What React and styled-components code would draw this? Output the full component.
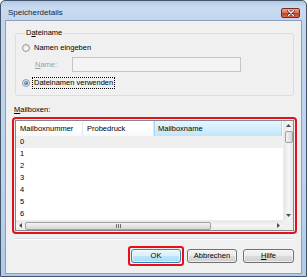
import React from 'react';
import styled, { createGlobalStyle } from 'styled-components';

const Global = createGlobalStyle`
  html, body { margin: 0; padding: 0; background: #fff; }
  body { font-family: "Liberation Sans", Arial, sans-serif; font-size: 7.5px; color: #000; }
  #root { width: 307px; height: 277px; }
`;

const Window = styled.div`
  box-sizing: border-box;
  width: 307px;
  height: 277px;
  border: 1px solid #44546a;
  border-radius: 5px 5px 0 0;
  background: linear-gradient(to bottom, #b2cae6 0px, #c9dbf0 7px, #c2d6ed 19px, #bcd3ec 60%, #b0cbe8 100%);
  display: flex;
  flex-direction: column;
  overflow: hidden;
`;

const TitleBar = styled.div`
  height: 19px;
  box-sizing: border-box;
  padding: 4px 6px 0 7px;
  display: flex;
  align-items: center;
  justify-content: space-between;
`;

const Title = styled.span`
  font-size: 8px;
  line-height: 10px;
  color: #1b2633;
`;

const CloseButton = styled.div`
  box-sizing: border-box;
  width: 19px;
  height: 10px;
  border: 1px solid #7a2a22;
  border-radius: 2px;
  background: linear-gradient(#eaa597 0%, #d9735f 45%, #c4402a 55%, #d8664c 100%);
  display: flex;
  align-items: center;
  justify-content: center;
`;

const Client = styled.div`
  flex: 1;
  margin: 0 4px 2px 4px;
  background: #f0f0f0;
  border: 1px solid #8aa0ba;
  display: flex;
  flex-direction: column;
`;

const GroupBox = styled.fieldset`
  margin: 7px 7px 0 9px;
  padding: 4px 0 6px 6px;
  border: 1px solid #d5dfe5;
  border-radius: 3px;
  display: flex;
  flex-direction: column;
`;

const Legend = styled.legend`
  margin-left: 3px;
  padding: 0 1px;
  line-height: 10px;
  font-size: 7.5px;
`;

const RadioRow = styled.div`
  height: 12px;
  display: flex;
  align-items: center;
  margin-top: ${p => p.$mt || 0}px;
`;

const RadioCircle = styled.span`
  box-sizing: border-box;
  width: 8px;
  height: 8px;
  border-radius: 50%;
  border: 1px solid #9a9a9a;
  background: radial-gradient(circle at 50% 60%, #ffffff 0%, #e6e6e6 60%, #d6d6d6 100%);
  display: flex;
  align-items: center;
  justify-content: center;
  &::after {
    content: "";
    display: ${p => (p.$checked ? 'block' : 'none')};
    width: 4px;
    height: 4px;
    border-radius: 50%;
    background: radial-gradient(circle at 40% 35%, #8ec7f2 0%, #2f79c2 60%, #1a4f8e 100%);
  }
`;

const RadioLabel = styled.span`
  margin-left: 2px;
  padding: 0 1px;
  line-height: 10px;
  border: 1px ${p => (p.$focus ? 'dotted #000' : 'solid transparent')};
`;

const NameRow = styled.div`
  display: flex;
  align-items: center;
  margin-top: 3px;
  height: 15px;
`;

const NameLabel = styled.span`
  width: 37px;
  margin-left: 13px;
  color: #a0a0a0;
`;

const TextBox = styled.div`
  box-sizing: border-box;
  width: 169px;
  height: 15px;
  border: 1px solid #c5c5c5;
  background: #f4f4f4;
`;

const U = styled.span`
  text-decoration: underline;
`;

const SectionLabel = styled.div`
  margin: 9px 0 0 8px;
  line-height: 10px;
`;

const Highlight = styled.div`
  margin: 2px 4px 0 6px;
  border: 2px solid #e5101a;
  border-radius: 4px;
  padding: 1px;
`;

const ListView = styled.div`
  border: 1px solid #828790;
  background: #fff;
  display: grid;
  grid-template-columns: 1fr 10px;
  grid-template-rows: 99px 10px;
`;

const ListBody = styled.div`
  overflow: hidden;
  display: flex;
  flex-direction: column;
`;

const HeaderRow = styled.div`
  display: flex;
  height: 15px;
  background: linear-gradient(#ffffff 0%, #ffffff 50%, #f7f8fa 100%);
`;

const HeaderCell = styled.div`
  box-sizing: border-box;
  width: ${p => p.$w}px;
  padding-left: 4px;
  display: flex;
  align-items: center;
  border-right: 1px solid #e3e8ee;
  ${p => p.$active && `
    background: linear-gradient(#e3f6fe 0%, #d3effd 50%, #c0e6fb 100%);
    border-left: 1px solid #a5d8f3;
    border-right: 1px solid #a5d8f3;
    padding-left: 3px;
  `}
`;

const Row = styled.div`
  height: 12px;
  line-height: 12px;
  padding-left: 4px;
  background: ${p => (p.$shaded ? '#efefef' : '#fff')};
`;

const VScroll = styled.div`
  background: linear-gradient(to right, #e6e6e6, #f5f5f5 50%, #e9e9e9);
  border-left: 1px solid #ececec;
  display: flex;
  flex-direction: column;
  align-items: center;
`;

const HScroll = styled.div`
  background: linear-gradient(#e6e6e6, #f5f5f5 50%, #e9e9e9);
  border-top: 1px solid #ececec;
  display: flex;
  align-items: center;
`;

const ArrowBox = styled.div`
  width: ${p => p.$w || 9}px;
  height: ${p => p.$h || 9}px;
  display: flex;
  align-items: center;
  justify-content: center;
  flex: none;
`;

const VThumb = styled.div`
  box-sizing: border-box;
  width: 8px;
  height: 12px;
  margin-top: 1px;
  border: 1px solid #a0a0a0;
  border-radius: 2px;
  background: linear-gradient(to right, #f4f4f4, #e4e4e4 50%, #d6d6d6);
`;

const VSpacer = styled.div`
  flex: 1;
`;

const HThumb = styled.div`
  box-sizing: border-box;
  width: 186px;
  height: 8px;
  margin-left: 0;
  border: 1px solid #a0a0a0;
  border-radius: 2px;
  background: linear-gradient(#f4f4f4, #e4e4e4 50%, #d6d6d6);
  display: flex;
  align-items: center;
  justify-content: center;
  flex: none;
`;

const Grip = styled.span`
  width: 5px;
  height: 4px;
  background: repeating-linear-gradient(to right, #6f6f6f 0 1px, transparent 1px 2px);
`;

const HSpacer = styled.div`
  flex: 1;
`;

const Corner = styled.div`
  background: #f0f0f0;
`;

const Separator = styled.div`
  margin: 4px 7px 0 8px;
  height: 1px;
  background: #d5dfe5;
  border-bottom: 1px solid #fff;
`;

const ButtonRow = styled.div`
  display: flex;
  justify-content: flex-end;
  align-items: center;
  margin: 6px 7px 0 0;
`;

const ButtonHighlight = styled.div`
  border: 2px solid #e5101a;
  border-radius: 3px;
  padding: 1px;
  display: flex;
`;

const Button = styled.div`
  box-sizing: border-box;
  width: ${p => p.$w}px;
  height: 14px;
  margin-left: ${p => p.$ml || 0}px;
  border: 1px solid ${p => (p.$default ? '#3c7fb1' : '#707070')};
  border-radius: 3px;
  background: ${p =>
    p.$default
      ? 'linear-gradient(#eaf6fd 0%, #d9f0fc 50%, #bee6fd 50%, #a7d9f5 100%)'
      : 'linear-gradient(#f2f2f2 0%, #ebebeb 50%, #dddddd 50%, #cfcfcf 100%)'};
  box-shadow: inset 0 0 0 1px rgba(255, 255, 255, 0.6);
  display: flex;
  align-items: center;
  justify-content: center;
  line-height: 10px;
`;

const Up = () => (
  <svg width="5" height="3" viewBox="0 0 5 3"><polygon points="2.5,0 5,3 0,3" fill="#4d4d4d" /></svg>
);
const Down = () => (
  <svg width="5" height="3" viewBox="0 0 5 3"><polygon points="0,0 5,0 2.5,3" fill="#4d4d4d" /></svg>
);
const Left = () => (
  <svg width="3" height="5" viewBox="0 0 3 5"><polygon points="3,0 3,5 0,2.5" fill="#4d4d4d" /></svg>
);
const Right = () => (
  <svg width="3" height="5" viewBox="0 0 3 5"><polygon points="0,0 3,2.5 0,5" fill="#4d4d4d" /></svg>
);

const rows = ['0', '1', '2', '3', '4', '5', '6'];

export default function App() {
  return (
    <>
      <Global />
      <Window>
        <TitleBar>
          <Title>Speicherdetails</Title>
          <CloseButton>
            <svg width="8" height="6" viewBox="0 0 8 6">
              <path d="M1.5 0.5 L6.5 5.5 M6.5 0.5 L1.5 5.5" stroke="#5a1a12" strokeWidth="2.6" strokeLinecap="round" />
              <path d="M1.5 0.5 L6.5 5.5 M6.5 0.5 L1.5 5.5" stroke="#ffffff" strokeWidth="1.4" strokeLinecap="round" />
            </svg>
          </CloseButton>
        </TitleBar>
        <Client>
          <GroupBox>
            <Legend>D<U>a</U>teiname</Legend>
            <RadioRow>
              <RadioCircle />
              <RadioLabel>Namen eingeben</RadioLabel>
            </RadioRow>
            <NameRow>
              <NameLabel><U>N</U>ame:</NameLabel>
              <TextBox />
            </NameRow>
            <RadioRow $mt={5}>
              <RadioCircle $checked />
              <RadioLabel $focus>Dateinamen verwenden</RadioLabel>
            </RadioRow>
          </GroupBox>
          <SectionLabel><U>M</U>ailboxen:</SectionLabel>
          <Highlight>
            <ListView>
              <ListBody>
                <HeaderRow>
                  <HeaderCell $w={67}>Mailboxnummer</HeaderCell>
                  <HeaderCell $w={71}>Probedruck</HeaderCell>
                  <HeaderCell $w={128} $active>Mailboxname</HeaderCell>
                </HeaderRow>
                {rows.map((r, i) => (
                  <Row key={r} $shaded={i === 0}>{r}</Row>
                ))}
              </ListBody>
              <VScroll>
                <ArrowBox $w={10}><Up /></ArrowBox>
                <VThumb />
                <VSpacer />
                <ArrowBox $w={10}><Down /></ArrowBox>
              </VScroll>
              <HScroll>
                <ArrowBox $h={10}><Left /></ArrowBox>
                <HThumb><Grip /></HThumb>
                <HSpacer />
                <ArrowBox $h={10}><Right /></ArrowBox>
              </HScroll>
              <Corner />
            </ListView>
          </Highlight>
          <Separator />
          <ButtonRow>
            <ButtonHighlight>
              <Button $w={50} $default>OK</Button>
            </ButtonHighlight>
            <Button $w={50} $ml={3}>Abbrechen</Button>
            <Button $w={51} $ml={6}><U>H</U>ilfe</Button>
          </ButtonRow>
        </Client>
      </Window>
    </>
  );
}
